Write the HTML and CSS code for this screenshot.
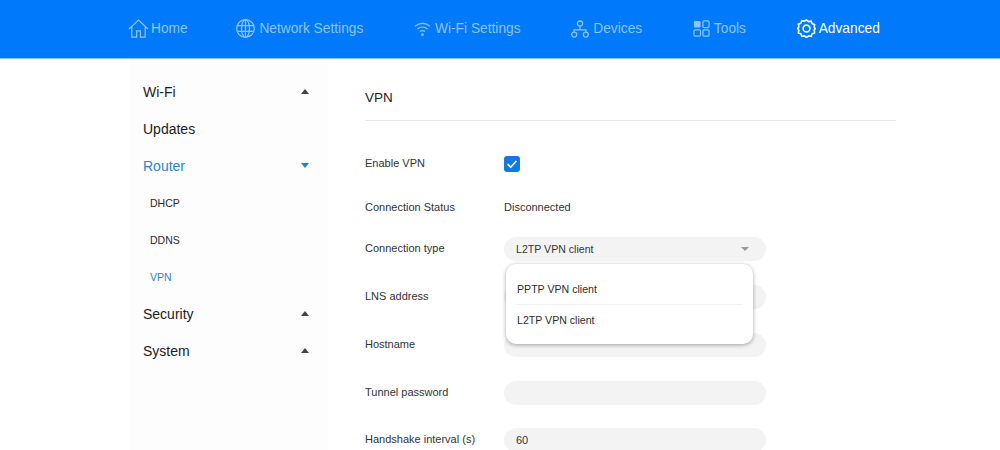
FILE: index.html
```html
<!DOCTYPE html>
<html lang="en">
<head>
<meta charset="utf-8">
<title>VPN</title>
<link rel="stylesheet" href="styles.css">
</head>
<body>
<header class="topbar">
  <nav class="nav">
    <a class="nav-item nav-home">
      <svg class="ico ico-home" viewBox="0 0 22 20"><path d="M1 10.5 11 1.2l10 9.3M4 8.5V19h5v-6.5h4V19h5V8.5"/></svg>
      <span>Home</span>
    </a>
    <a class="nav-item">
      <svg class="ico ico-globe" viewBox="0 0 20 20"><circle cx="10" cy="10" r="9.3"/><ellipse cx="10" cy="10" rx="4.2" ry="9.3"/><path d="M1.4 7h17.2M1.4 13h17.2M10 .7v18.6"/></svg>
      <span>Network Settings</span>
    </a>
    <a class="nav-item">
      <svg class="ico ico-wifi" viewBox="0 0 18 16"><path d="M1 5.2c4.6-4.2 11.4-4.2 16 0M3.7 8c3.1-2.8 7.5-2.8 10.6 0M6.3 10.7c1.6-1.3 3.8-1.3 5.4 0"/><circle class="solid" cx="9" cy="14" r="1.5"/></svg>
      <span>Wi-Fi Settings</span>
    </a>
    <a class="nav-item">
      <svg class="ico ico-devices" viewBox="0 0 18 18"><circle cx="9" cy="3.6" r="2.6"/><circle cx="3.2" cy="14.6" r="2.5"/><circle cx="14.8" cy="14.6" r="2.5"/><path d="M9 6.2v3.6M3.2 12v-2.2h11.6V12"/></svg>
      <span>Devices</span>
    </a>
    <a class="nav-item">
      <svg class="ico ico-tools" viewBox="0 0 18 18"><rect class="solid" x="1" y="1" width="7" height="7" rx="1.4"/><rect x="10.5" y="1" width="6.5" height="7" rx="1.2"/><rect x="1" y="10.5" width="7" height="6.5" rx="1.2"/><rect x="10.5" y="10.5" width="6.5" height="6.5" rx="1.2"/></svg>
      <span>Tools</span>
    </a>
    <a class="nav-item nav-active">
      <svg class="ico ico-gear" viewBox="0 0 20 20"><path d="M10 1l2.2 1.7 2.7-.4 1 2.6 2.6 1-.4 2.8L19.2 10l-1.1 1.9.4 2.7-2.6 1-1 2.6-2.7-.4L10 19.5l-2.2-1.7-2.7.4-1-2.6-2.6-1 .4-2.7L.8 10l1.1-1.8-.4-2.8 2.6-1 1-2.6 2.7.4z"/><circle cx="10" cy="10" r="3.6"/></svg>
      <span>Advanced</span>
    </a>
  </nav>
</header>

<div class="page">
  <aside class="sidebar">
    <div class="side-item"><span>Wi-Fi</span><i class="caret caret-up"></i></div>
    <div class="side-item"><span>Updates</span></div>
    <div class="side-item side-on"><span>Router</span><i class="caret caret-down"></i></div>
    <div class="side-sub">DHCP</div>
    <div class="side-sub">DDNS</div>
    <div class="side-sub side-on">VPN</div>
    <div class="side-item"><span>Security</span><i class="caret caret-up"></i></div>
    <div class="side-item"><span>System</span><i class="caret caret-up"></i></div>
  </aside>

  <main class="content">
    <h1 class="title">VPN</h1>
    <div class="form">
      <div class="row row-enable">
        <label class="lbl">Enable VPN</label>
        <span class="check"><svg viewBox="0 0 16 16"><path d="M3.6 8.2 6.8 11.2 12.4 5"/></svg></span>
      </div>
      <div class="row row-status">
        <label class="lbl">Connection Status</label>
        <span class="val">Disconnected</span>
      </div>
      <div class="row row-type">
        <label class="lbl">Connection type</label>
        <div class="field field-select">L2TP VPN client<i class="caret caret-grey"></i>
          <div class="menu">
            <div class="menu-opt">PPTP VPN client</div>
            <div class="menu-opt">L2TP VPN client</div>
          </div>
        </div>
      </div>
      <div class="row"><label class="lbl">LNS address</label><div class="field"></div></div>
      <div class="row"><label class="lbl">Hostname</label><div class="field"></div></div>
      <div class="row"><label class="lbl">Tunnel password</label><div class="field"></div></div>
      <div class="row row-last"><label class="lbl">Handshake interval (s)</label><div class="field">60</div></div>
    </div>
  </main>
</div>
</body>
</html>
```

FILE: styles.css
```css
* { box-sizing: border-box; }
html, body { margin: 0; height: 450px; overflow: hidden; background: #fff; }
body { font-family: "Liberation Sans", Arial, sans-serif; color: #222; }

.topbar {
  height: 59px;
  background: #0079fa;
  border-bottom: 1px solid #8cc4fb;
}
.nav { display: flex; gap: 50.7px; padding: 0 0 0 128px; height: 56px; align-items: center; }
.nav-item { display: flex; align-items: center; gap: 3px; font-size: 13.75px; color: #8fc4fd; }
.nav-home { gap: 2px; margin-right: -2px; }
.nav-active { color: #fff; }
.ico { display: block; fill: none; stroke: currentColor; stroke-width: 1.3; }
.ico .solid { fill: currentColor; stroke: none; }
.ico-home { width: 21px; height: 19px; margin-top: 1px; }
.ico-globe { width: 19px; height: 19px; margin-right: 1px; }
.ico-wifi { width: 17px; height: 16px; margin-top: 2px; margin-right: 1px; }
.ico-devices { width: 18px; height: 18px; margin-top: 1px; margin-right: 1px; }
.ico-tools { width: 17px; height: 17px; margin-right: 1px; }
.ico-gear { width: 19px; height: 19px; stroke-width: 1.7; }

.page { display: flex; height: 391px; padding-left: 130px; }
.sidebar { width: 198px; padding-top: 14px; background: #fdfdfd; flex: none; }
.side-item {
  height: 37px; padding: 0 19px 0 13px;
  display: flex; align-items: center; justify-content: space-between;
  font-size: 14px; color: #1c1c1c;
}
.side-sub { height: 37px; padding-left: 20px; display: flex; align-items: center; font-size: 10.5px; color: #2a2a2a; }
.side-on { color: #2a85cf; }
.caret { display: block; width: 0; height: 0; border-left: 4.5px solid transparent; border-right: 4.5px solid transparent; }
.caret-up { border-bottom: 5px solid #444; }
.caret-down { border-top: 5px solid #1f80d6; }
.caret-grey { border-top: 4px solid #999; margin-left: auto; }

.content { width: 531px; margin-left: 37px; flex: none; }
.title {
  margin: 0; height: 62px; padding-top: 30px;
  font-size: 13.5px; font-weight: 400; line-height: 18px; color: #222;
  border-bottom: 1px solid #e8e8e8;
}
.form { display: flex; flex-direction: column; gap: 24px; padding-top: 31px; }
.row { display: flex; align-items: center; height: 24px; font-size: 11px; }
.lbl { width: 139px; flex: none; color: #333; margin-top: -2px; }
.val { color: #333; }
.row-status { margin-top: -5px; }
.row-status .lbl { margin-top: 0; }
.row-type { margin-top: -6px; }
.row-last { margin-top: -1px; }
.check {
  width: 16px; height: 16px; border-radius: 3px; background: #1379e0;
  display: block;
}
.check svg { display: block; width: 16px; height: 16px; fill: none; stroke: #fff; stroke-width: 1.6; }
.field {
  position: relative; width: 262px; height: 24px; border-radius: 12px;
  background: #f3f3f3; padding: 0 17px 0 12px;
  display: flex; align-items: center; color: #333;
}
.field-select { font-size: 10.6px; }
.menu {
  position: absolute; left: 2px; top: 27px; width: 247px; height: 80px;
  background: #fff; border-radius: 10px;
  box-shadow: 0 1px 4px rgba(0,0,0,.35);
  padding: 9px 10px;
  z-index: 2;
}
.menu-opt { height: 31px; padding-left: 1px; display: flex; align-items: center; color: #2c2c2c; }
.menu-opt + .menu-opt { border-top: 1px solid #f0f0f0; }
```
